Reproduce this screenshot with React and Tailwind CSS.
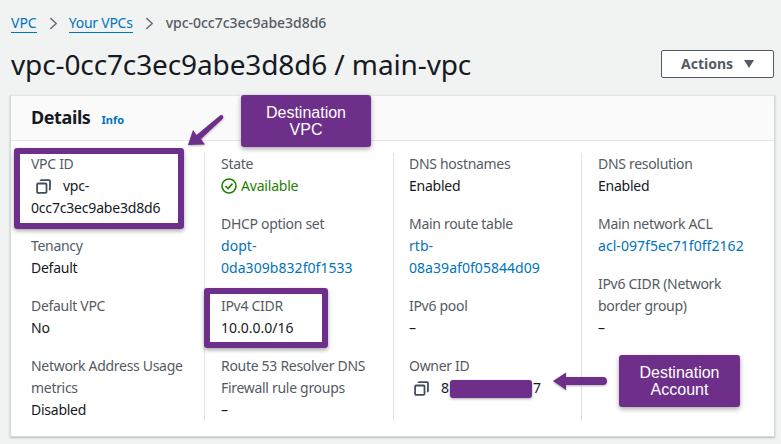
const Copy = ({ className = "" }) => (
  <svg viewBox="0 0 16 16" className={`w-[15px] h-[15px] ${className}`} fill="none" stroke="#414d5c" strokeWidth="1.9">
    <rect x="1.2" y="4.8" width="10" height="10" rx="1" />
    <path d="M4.8 2.2V2a.9.9 0 0 1 .9-.9h8.300a.9.9 0 0 1 .9.9v8.300a.9.9 0 0 1-.9.9h-.3" />
  </svg>
);

const Label = ({ children }) => <div className="text-[#545b64] tracking-[-0.3px]">{children}</div>;
const Value = ({ children }) => <div className="text-[#16191f] tracking-[-0.25px]">{children}</div>;
const Num = ({ children }) => <div className="text-[#16191f]">{children}</div>;
const LinkV = ({ children }) => <div className="text-[#0073bb] tracking-[0.05px]">{children}</div>;

const Item = ({ label, children }) => (
  <div>
    <Label>{label}</Label>
    {children}
  </div>
);

const Column = ({ children, divider, className = "pl-4" }) => (
  <div className={`flex flex-col gap-4 ${className} ${divider ? "border-l border-[#e0e3e5]" : ""}`}>{children}</div>
);

const Callout = ({ className, children }) => (
  <div className={`absolute bg-[#6d2f8a] text-white rounded-[3px] shadow-[0_2px_5px_rgba(0,0,0,0.35)] flex items-center justify-center text-center text-[16px] leading-[17px] font-['Liberation_Sans',sans-serif] ${className}`}>
    {children}
  </div>
);

const Chevron = () => (
  <svg viewBox="0 0 10 14" className="w-[9px] h-[13px] mx-[12px]" fill="none" stroke="#687078" strokeWidth="1.6"><path d="M1.5 1l6.5 6-6.500 6" /></svg>
);

export default function App() {
  return (
    <div className="relative w-[781px] h-[444px] overflow-hidden bg-[#f1f3f3] font-['Noto_Sans',sans-serif] text-[14px] leading-[22px]">
      <nav className="flex items-center pt-[12px] pl-[11px] h-[34px] text-[#545b64]">
        <span className="text-[#0073bb] border-b border-[#0073bb] leading-[19px]">VPC</span>
        <Chevron />
        <span className="text-[#0073bb] border-b border-[#0073bb] leading-[19px] tracking-[-0.25px] -ml-px">Your VPCs</span>
        <Chevron />
        <span className="font-medium tracking-[-0.02px]">vpc-0cc7c3ec9abe3d8d6</span>
      </nav>

      <header className="flex items-center justify-between pl-[11px] pr-[7px] h-[61px]">
        <h1 className="text-[28px] leading-[36px] text-[#16191f] font-normal tracking-[-0.12px] -mt-px">vpc-0cc7c3ec9abe3d8d6 / main-vpc</h1>
        <button className="w-[113px] h-[28px] border border-[#545b64] rounded-[2px] bg-white text-[#545b64] font-bold flex items-center justify-center gap-[11px] text-[14px] -mt-[2px]">
          Actions
          <svg viewBox="0 0 10 8" className="w-[10px] h-[8px]" fill="#545b64"><path d="M0 0h10L5 8z" /></svg>
        </button>
      </header>

      <section className="ml-[10px] w-[765px] h-[342px] bg-white border-r border-b border-l border-[#d5dbdb] shadow-[0_1px_2px_rgba(0,28,36,0.25)]">
        <div className="h-[46px] bg-[#fafafa] border-b border-t border-[#e4e7e8] flex items-center pl-[20px] gap-[11px]">
          <h2 className="text-[18px] font-bold text-[#16191f] tracking-[-0.4px] -mt-[3px]">Details</h2>
          <span className="text-[#0073bb] text-[11px] font-bold pt-[3px]">Info</span>
        </div>

        <div className="grid grid-cols-[189px_189px_188px_189px] pl-[4px] mt-[12px]">
          <Column>
            <Item label="VPC ID">
              <div className="flex items-center pl-[5px] gap-[12px]"><Copy /><Value>vpc-</Value></div>
              <div className="text-[#16191f] tracking-[-0.18px]">0cc7c3ec9abe3d8d6</div>
            </Item>
            <Item label="Tenancy"><Value>Default</Value></Item>
            <Item label="Default VPC"><Value>No</Value></Item>
            <Item label={<>Network Address Usage<br />metrics</>}><Value>Disabled</Value></Item>
          </Column>
          <Column divider>
            <Item label="State">
              <div className="flex items-center gap-[4px] text-[#1d8102] tracking-[-0.2px]">
                <svg viewBox="0 0 16 16" className="w-[16px] h-[16px]" fill="none" stroke="#1d8102" strokeWidth="1.6"><circle cx="8" cy="8" r="7" /><path d="M4.5 8l2.6 2.6 4.4-5" /></svg>
                Available
              </div>
            </Item>
            <Item label="DHCP option set"><LinkV>dopt-<br />0da309b832f0f1533</LinkV></Item>
            <Item label="IPv4 CIDR"><Num>10.0.0.0/16</Num></Item>
            <Item label={<>Route 53 Resolver DNS<br />Firewall rule groups</>}><Value>–</Value></Item>
          </Column>
          <Column divider className="pl-[15px]">
            <Item label="DNS hostnames"><Value>Enabled</Value></Item>
            <Item label="Main route table"><LinkV>rtb-<br />08a39af0f05844d09</LinkV></Item>
            <Item label="IPv6 pool"><Value>–</Value></Item>
            <Item label="Owner ID">
              <div className="flex items-center pl-[5px] gap-[12px]"><Copy /><Num>8</Num><span className="ml-[72px] text-[#16191f]">7</span></div>
            </Item>
          </Column>
          <Column divider>
            <Item label="DNS resolution"><Value>Enabled</Value></Item>
            <Item label="Main network ACL"><LinkV>acl-097f5ec71f0ff2162</LinkV></Item>
            <Item label={<>IPv6 CIDR (Network<br />border group)</>}><Value>–</Value></Item>
          </Column>
        </div>
      </section>

      {/* Annotations layered over the screenshot */}
      <div className="absolute left-[14px] top-[148px] w-[170px] h-[81px] border-[6px] border-[#6d2f8a] rounded-[3px] shadow-[0_2px_4px_rgba(0,0,0,0.35)]" />
      <div className="absolute left-[204px] top-[288px] w-[124px] h-[60px] border-[6px] border-[#6d2f8a] rounded-[3px] shadow-[0_2px_4px_rgba(0,0,0,0.35)]" />
      <Callout className="left-[241px] top-[95px] w-[130px] h-[52px]">Destination<br />VPC</Callout>
      <Callout className="left-[619px] top-[355px] w-[121px] h-[52px]">Destination<br />Account</Callout>
      <div className="absolute left-[450px] top-[380px] w-[82px] h-[18px] rounded-[3px] bg-[#6d2f8a] shadow-[0_1px_3px_rgba(0,0,0,0.35)]" />
      <svg className="absolute left-[186px] top-[110px] w-[40px] h-[40px] drop-shadow-[0_1px_1px_rgba(0,0,0,0.3)]" viewBox="0 0 40 40" fill="#6d2f8a">
        <path d="M2 35L7 20l3.500 5L34 5.500c2.500-1.500 4.500 1.500 2.500 3.500L15 29l4 5.500z" />
      </svg>
      <svg className="absolute left-[552px] top-[369px] w-[56px] h-[24px] drop-shadow-[0_1px_1px_rgba(0,0,0,0.3)]" viewBox="0 0 56 24" fill="#6d2f8a">
        <path d="M1 12L14 3.500V8h37a4 4 0 0 1 0 8H14v5z" />
      </svg>
    </div>
  );
}
